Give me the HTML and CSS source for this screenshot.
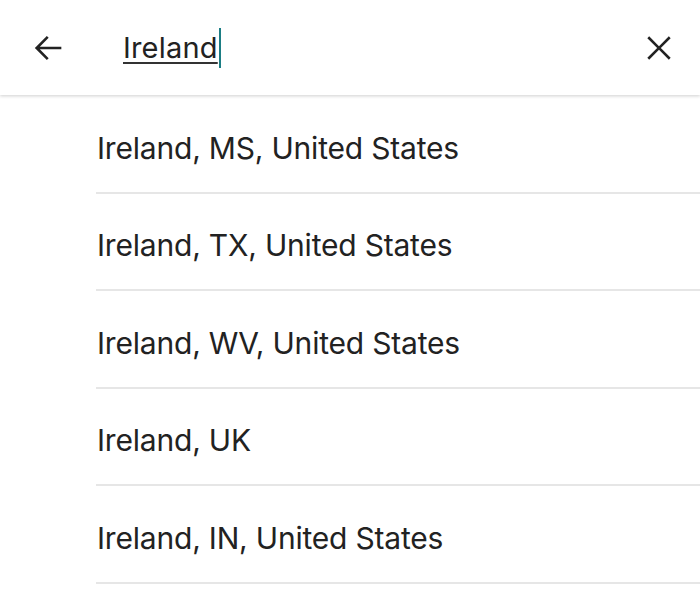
FILE: index.html
```html
<!DOCTYPE html>
<html>
<head>
<meta charset="utf-8">
<link rel="stylesheet" href="styles.css">
</head>
<body>
<header class="bar">
  <button class="icon-btn back" aria-label="Back">
    <svg width="40" height="40" viewBox="0 0 24 24"><path d="M20 11.2H7.1l5.3-5.3-1.1-1.1L4.1 12l7.2 7.2 1.1-1.1-5.3-5.3H20v-1.6z" fill="#222"/></svg>
  </button>
  <div class="query"><span class="query-text">Ireland</span><span class="caret"></span></div>
  <button class="icon-btn close" aria-label="Clear">
    <svg width="40" height="40" viewBox="0 0 24 24"><path d="M19 6.1L17.9 5 12 10.9 6.1 5 5 6.1 10.9 12 5 17.9 6.1 19 12 13.1 17.9 19 19 17.9 13.1 12z" fill="#222"/></svg>
  </button>
</header>
<ul class="results">
  <li class="row">Ireland, MS, United States</li>
  <li class="row">Ireland, TX, United States</li>
  <li class="row">Ireland, WV, United States</li>
  <li class="row">Ireland, UK</li>
  <li class="row">Ireland, IN, United States</li>
</ul>
</body>
</html>
```
FILE: styles.css
```css
html, body {
  margin: 0;
  padding: 0;
  background: #fff;
  font-family: Inter, Roboto, sans-serif;
  color: #222;
}
.bar {
  height: 95px;
  display: flex;
  align-items: center;
  box-shadow: 0 1px 3px rgba(0,0,0,0.12), 0 2px 3px rgba(0,0,0,0.05);
  position: relative;
  z-index: 1;
}
.icon-btn {
  background: none;
  border: 0;
  padding: 0;
  display: flex;
  align-items: center;
  justify-content: center;
}
.back {
  width: 40px;
  height: 40px;
  margin-left: 28px;
}
.query {
  margin-left: 55px;
  flex: 1;
  display: flex;
  align-items: center;
  font-size: 29px;
  line-height: 40px;
  padding-top: 1px;
}
.query-text {
  text-decoration: underline;
  text-decoration-thickness: 2px;
  text-underline-offset: 4px;
  text-decoration-color: #333;
  letter-spacing: 0.2px;
}
.caret {
  width: 2px;
  height: 40px;
  background: #1b7d84;
  margin-left: 1px;
}
.close {
  width: 40px;
  height: 40px;
  margin-right: 21px;
}
.results {
  list-style: none;
  margin: 1px 0 0;
  padding: 0 0 0 96px;
}
.row {
  border-bottom: 2px solid #e6e6e6;
  display: flex;
  align-items: center;
  padding-left: 1px;
  padding-top: 8px;
  box-sizing: border-box;
  height: 97.5px;
  font-size: 30px;
  letter-spacing: -0.2px;
}
```
